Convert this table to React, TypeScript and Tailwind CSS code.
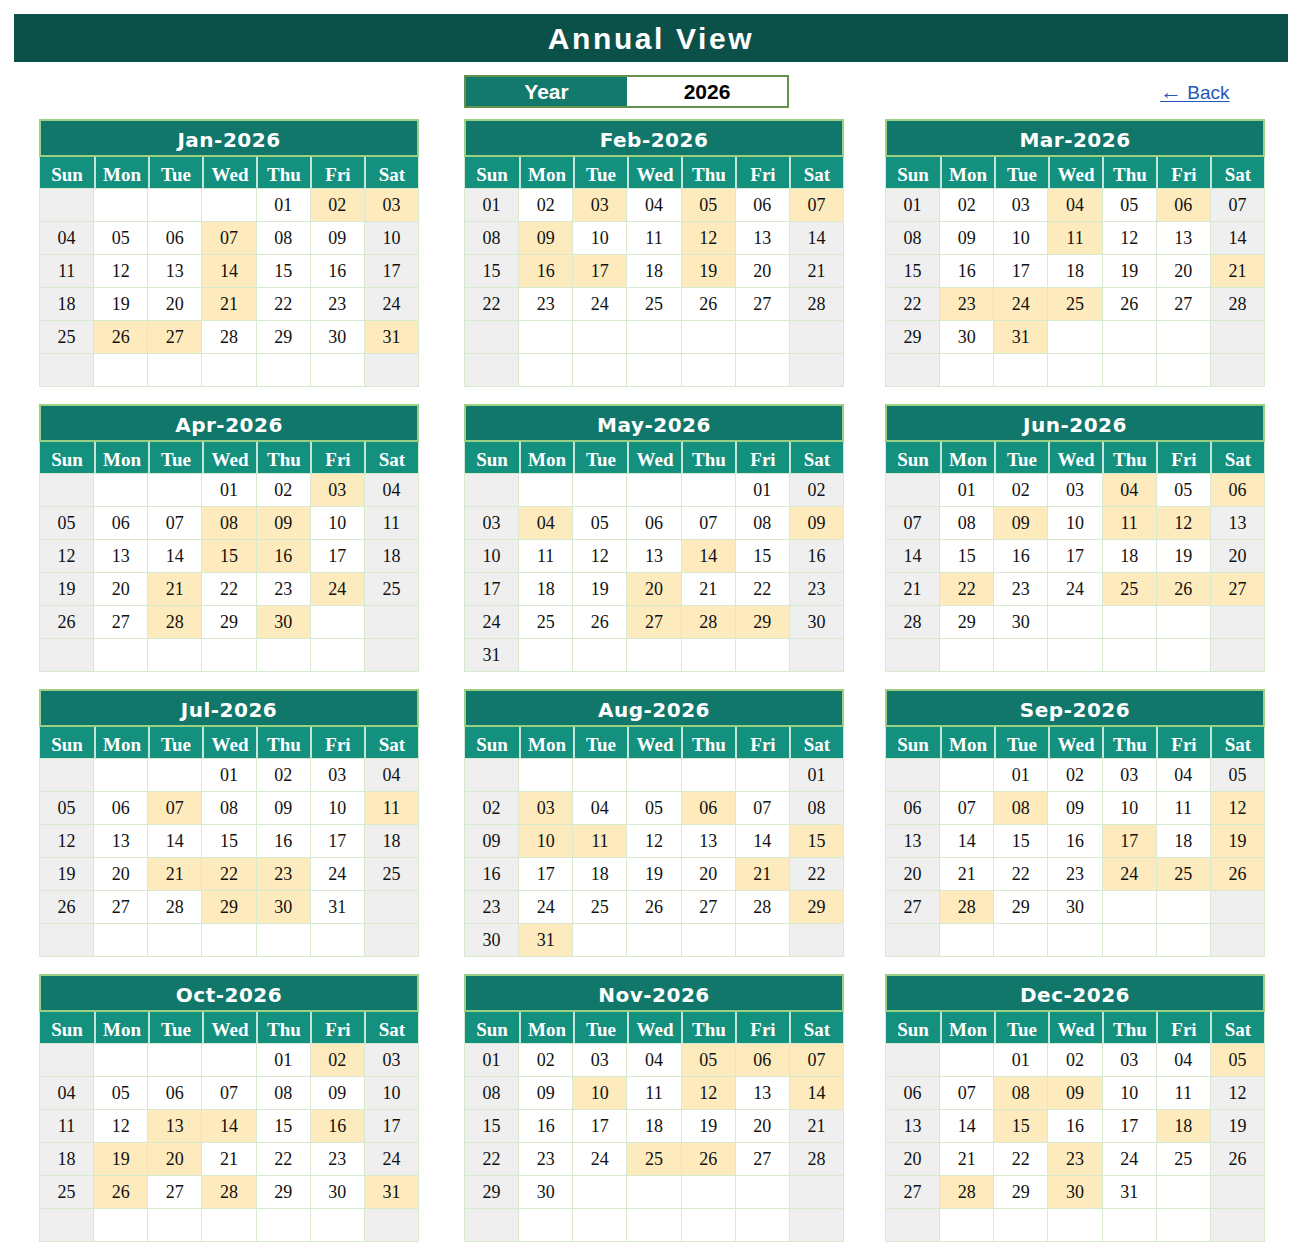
import React from "react";

const MONTHS = ["Jan", "Feb", "Mar", "Apr", "May", "Jun", "Jul", "Aug", "Sep", "Oct", "Nov", "Dec"];
const DAYS = ["Sun", "Mon", "Tue", "Wed", "Thu", "Fri", "Sat"];

// highlighted dates per month (yellow cells)
const MARKED: number[][] = [
  [2, 3, 7, 14, 21, 26, 27, 31],
  [3, 5, 7, 9, 12, 16, 17, 19],
  [4, 6, 11, 21, 23, 24, 25, 31],
  [3, 8, 9, 15, 16, 21, 24, 28, 30],
  [4, 9, 14, 20, 27, 28, 29],
  [4, 6, 9, 11, 12, 22, 25, 26, 27],
  [7, 11, 21, 22, 23, 29, 30],
  [3, 6, 10, 11, 15, 21, 29, 31],
  [8, 12, 17, 19, 24, 25, 26, 28],
  [2, 13, 14, 16, 19, 20, 26, 28, 31],
  [5, 6, 7, 10, 12, 14, 25, 26],
  [5, 8, 9, 15, 18, 23, 28, 30],
];

const COL_MARGIN = ["", "ml-[45px]", "ml-[41px]"];

function MonthCard({ year, month }: { year: number; month: number }) {
  const first = new Date(year, month, 1).getDay();
  const count = new Date(year, month + 1, 0).getDate();
  const cells: (number | null)[] = [];
  for (let i = 0; i < 42; i++) {
    const d = i - first + 1;
    cells.push(d >= 1 && d <= count ? d : null);
  }

  return (
    <div className="w-[380px]">
      <div className="h-[38px] pt-[4px] bg-[#10776a] border-2 border-[#9bd084] flex items-center justify-center text-white text-[20px] font-bold font-['DejaVu_Sans',sans-serif] tracking-[0.5px]">
        {MONTHS[month]}-{year}
      </div>
      <div className="grid grid-cols-7 h-[31px] bg-[#14907f] border-x border-[#cfe8cf]">
        {DAYS.map((d, i) => (
          <div
            key={d}
            className={
              "flex items-center justify-center pt-[4px] text-white text-[19px] font-bold font-['Liberation_Serif',serif] " +
              (i > 0 ? "border-l-2 border-[#c4e6da]" : "")
            }
          >
            {d}
          </div>
        ))}
      </div>
      <div className="grid grid-cols-7 border-l border-t border-[#d7eacf]">
        {cells.map((d, i) => {
          const col = i % 7;
          const marked = d !== null && MARKED[month].includes(d);
          const bg = marked ? "bg-[#fdeabd]" : col === 0 || col === 6 ? "bg-[#efefef]" : "bg-white";
          return (
            <div
              key={i}
              className={
                "h-[33px] border-r border-b border-[#d7eacf] flex items-center justify-center text-[18px] text-[#111] font-['Liberation_Serif',serif] " +
                bg
              }
            >
              {d !== null ? String(d).padStart(2, "0") : ""}
            </div>
          );
        })}
      </div>
    </div>
  );
}

export default function App() {
  const year = 2026;
  const rows = [0, 1, 2, 3];

  return (
    <div className="w-[1302px] min-h-[1257px] bg-white pt-[14px] px-[14px] font-['Liberation_Sans',Arial,sans-serif]">
      {/* Title */}
      <div className="h-[48px] bg-[#0b5149] flex items-center justify-center text-white text-[30px] font-bold tracking-[2.6px]">
        Annual View
      </div>

      {/* Year selector + back link */}
      <div className="relative h-[57px] flex items-start pt-[13px]">
        <div className="flex h-[33px] w-[325px] border-2 border-[#64924c] ml-[450px]">
          <div className="w-[161px] bg-[#12796c] flex items-center justify-center text-white text-[21px] font-bold">
            Year
          </div>
          <div className="flex-1 bg-white flex items-center justify-center text-black text-[21px] font-bold">
            {year}
          </div>
        </div>
        <a href="#" className="absolute left-[1146px] top-[17px] text-[19px] text-[#2458b8] underline underline-offset-2">
          <span className="text-[22px] leading-none">←</span> Back
        </a>
      </div>

      {/* Month grid */}
      <div className="flex flex-col gap-[17px] pl-[25px]">
        {rows.map((r) => (
          <div key={r} className="flex">
            {[0, 1, 2].map((c) => (
              <div key={c} className={COL_MARGIN[c]}>
                <MonthCard year={year} month={r * 3 + c} />
              </div>
            ))}
          </div>
        ))}
      </div>
    </div>
  );
}
